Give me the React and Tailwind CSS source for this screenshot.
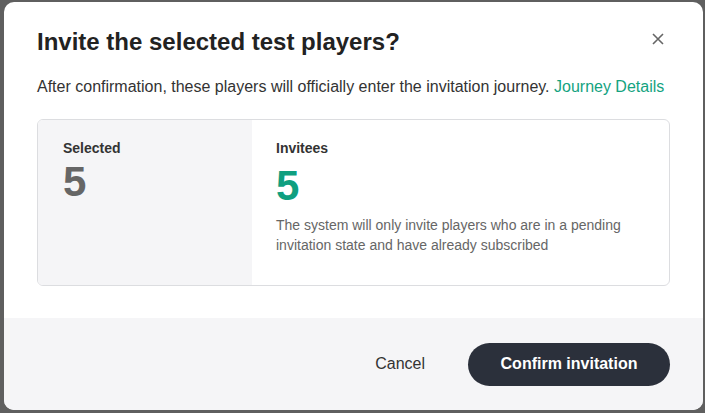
import React from "react";

export default function App() {
  return (
    <div
      className="w-[705px] h-[413px] bg-[#5f5f5f] pl-[4px] pt-[2px] overflow-hidden"
      style={{ fontFamily: '"Liberation Sans", Arial, sans-serif' }}
    >
      <div className="w-[699px] h-[408px] bg-white rounded-[10px] overflow-hidden flex flex-col">
        <div className="flex-1 px-[33px] pt-[24px]">
          <div className="flex items-start justify-between">
            <h2 className="text-[24px] leading-[32px] font-bold text-[#222]">
              Invite the selected test players?
            </h2>
            <button className="mt-[6px] mr-[5px] text-[#666] w-[14px] h-[14px] flex items-center justify-center">
              <svg width="12" height="12" viewBox="0 0 12 12" fill="none" stroke="currentColor" strokeWidth="1.6">
                <path d="M1 1L11 11M11 1L1 11" />
              </svg>
            </button>
          </div>
          <p className="mt-[18px] text-[16px] leading-[22px] text-[#333]">
            After confirmation, these players will officially enter the invitation journey.{" "}
            <span className="text-[#14a37f]">Journey Details</span>
          </p>
          <div className="mt-[21px] h-[167px] border border-[#dcdde0] rounded-[6px] overflow-hidden flex">
            <div className="w-[214px] bg-[#f5f5f7] pl-[25px] pt-[19px]">
              <div className="text-[14px] leading-[18px] font-bold text-[#333]">Selected</div>
              <div className="mt-[3px] text-[42px] leading-[44px] font-bold text-[#666]">5</div>
            </div>
            <div className="flex-1 pl-[24px] pt-[19px] pr-[24px]">
              <div className="text-[14px] leading-[18px] font-bold text-[#333]">Invitees</div>
              <div className="mt-[7px] text-[42px] leading-[44px] font-bold text-[#0f9f80]">5</div>
              <p className="mt-[7px] text-[14px] leading-[20px] text-[#666] w-[360px]">
                The system will only invite players who are in a pending invitation state and have already subscribed
              </p>
            </div>
          </div>
        </div>
        <div className="h-[92px] bg-[#f5f5f7] flex items-center justify-end pr-[33px]">
          <button className="text-[16px] text-[#333] mr-[43px]">Cancel</button>
          <button className="w-[202px] h-[43px] rounded-full bg-[#2b303b] text-white text-[16px] font-bold">
            Confirm invitation
          </button>
        </div>
      </div>
    </div>
  );
}
